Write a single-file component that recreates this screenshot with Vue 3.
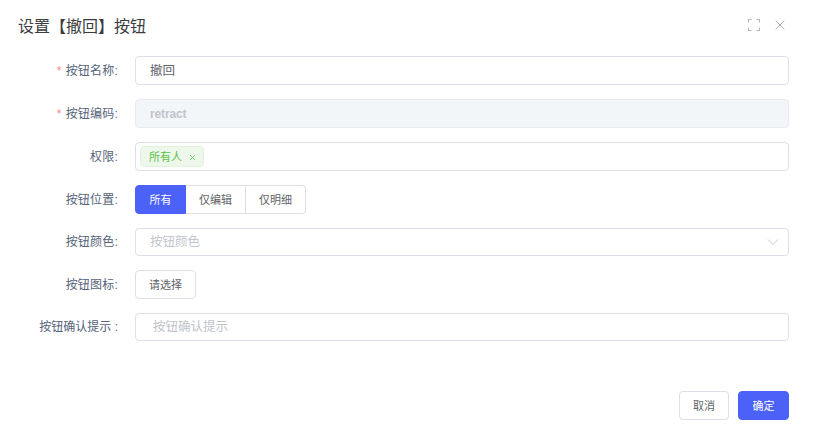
<template>
  <div class="dialog">
    <header class="head">
      <h1 class="title">设置【撤回】按钮</h1>
      <div class="tools">
        <svg class="ico" width="14" height="14" viewBox="0 0 14 14" fill="none" stroke="#b4b7bd" stroke-width="1.1">
          <path d="M1.5 4.5v-3h3M9.5 1.5h3v3M12.5 9.5v3h-3M4.5 12.5h-3v-3" />
        </svg>
        <svg class="ico" width="12" height="12" viewBox="0 0 12 12" fill="none" stroke="#a3a6ad" stroke-width="0.9">
          <path d="M1.7 1.7l8.6 8.6M10.3 1.7l-8.6 8.6" />
        </svg>
      </div>
    </header>
    <form class="form">
      <div class="row">
        <label class="label"><i>*</i>按钮名称:</label>
        <div class="input value"><span class="txt">撤回</span></div>
      </div>
      <div class="row">
        <label class="label"><i>*</i>按钮编码:</label>
        <div class="input disabled"><span class="txt">retract</span></div>
      </div>
      <div class="row">
        <label class="label">权限:</label>
        <div class="input tags">
          <span class="tag">
            <span class="txt">所有人</span>
            <svg class="tag-x" width="7" height="7" viewBox="0 0 7 7" fill="none" stroke="#6fcf72" stroke-width="1">
              <path d="M1 1l5 5M6 1L1 6" />
            </svg>
          </span>
        </div>
      </div>
      <div class="row">
        <label class="label">按钮位置:</label>
        <div class="group">
          <span v-for="(o, i) in options" :key="o.t" class="seg" :class="{ on: i === 0 }" :style="{ width: o.w + 'px' }"><span class="txt">{{ o.t }}</span></span>
        </div>
      </div>
      <div class="row short">
        <label class="label">按钮颜色:</label>
        <div class="input ph select">
          <span class="txt">按钮颜色</span>
          <svg width="12" height="8" viewBox="0 0 12 8" fill="none" stroke="#c4c7cd" stroke-width="1">
            <path d="M1 1.5l5 5 5-5" />
          </svg>
        </div>
      </div>
      <div class="row">
        <label class="label">按钮图标:</label>
        <button type="button" class="btn pick"><span class="txt">请选择</span></button>
      </div>
      <div class="row short">
        <label class="label wide">按钮确认提示 :</label>
        <div class="input ph tip"><span class="txt">按钮确认提示</span></div>
      </div>
    </form>
    <footer class="foot">
      <button type="button" class="btn"><span class="txt">取消</span></button>
      <button type="button" class="btn primary"><span class="txt">确定</span></button>
    </footer>
  </div>
</template>

<script setup>
const options = [
  { t: '所有', w: 51 },
  { t: '仅编辑', w: 60 },
  { t: '仅明细', w: 60 }
]
</script>

<style>
html, body { margin: 0; background: #fff; }
</style>

<style scoped>
.dialog {
  width: 814px;
  height: 437px;
  box-sizing: border-box;
  padding: 0 25px 0 0;
  display: flex;
  flex-direction: column;
  font-family: "Liberation Sans", "Noto Sans CJK SC", sans-serif;
  font-size: 12px;
  color: #606266;
  background: #fff;
  overflow: hidden;
}
.head {
  height: 56px;
  display: flex;
  align-items: flex-start;
  justify-content: space-between;
  padding-left: 18px;
  flex: none;
}
.title {
  margin: 17px 0 0;
  font-size: 16px;
  line-height: 20px;
  font-weight: 400;
  color: #3a3c40;
}
.tools {
  display: flex;
  align-items: center;
  gap: 13px;
  margin-top: 18px;
  margin-right: 3px;
}
.ico { display: block; }
.form {
  display: flex;
  flex-direction: column;
  gap: 14px;
  flex: none;
}
.row {
  display: flex;
  align-items: center;
  height: 29px;
}
.short { height: 28px; }
.txt { display: block; margin-top: -2px; }
.short .input .txt { margin-top: -4px; }
.label {
  width: 118px;
  flex: none;
  margin-right: 17px;
  padding-bottom: 3px;
  text-align: right;
  color: #56637a;
  letter-spacing: 0.2px;
  white-space: nowrap;
}
.label.wide { letter-spacing: 0; }
.label i {
  font-style: normal;
  color: #f78989;
  margin-right: 4px;
}
.input {
  flex: 1;
  height: 100%;
  box-sizing: border-box;
  border: 1px solid #dcdfe6;
  border-radius: 4px;
  padding: 0 14px;
  display: flex;
  align-items: center;
  font-size: 12.5px;
}
.value { color: #606266; }
.disabled {
  background: #f3f6f9;
  border-color: #e8ebf0;
  color: #c0c4cc;
  font-size: 12px;
  font-weight: 700;
  letter-spacing: -0.15px;
}
.disabled .txt { margin-top: 0; }
.ph { color: #c0c4cc; }
.tip { padding-left: 17px; }
.select { justify-content: space-between; padding-right: 9px; }
.tags { padding-left: 4px; }
.tag {
  height: 21px;
  box-sizing: border-box;
  padding: 0 7px 0 8px;
  background: #edf8ea;
  border: 1px solid #e1f3dc;
  border-radius: 4px;
  color: #5cc24a;
  font-size: 11px;
  display: flex;
  align-items: center;
}
.tag-x { margin-left: 7px; margin-top: 1px; }
.group { display: flex; height: 29px; }
.seg {
  box-sizing: border-box;
  display: flex;
  align-items: center;
  justify-content: center;
  border: 1px solid #dcdfe6;
  border-left-width: 0;
  color: #606266;
  font-size: 11px;
}
.seg:first-child { border-left-width: 1px; border-radius: 4px 0 0 4px; }
.seg:last-child { border-radius: 0 4px 4px 0; }
.seg.on { background: #4b61f8; border-color: #4b61f8; color: #fff; }
.btn {
  height: 29px;
  box-sizing: border-box;
  width: 50px;
  padding: 0;
  background: #fff;
  border: 1px solid #dcdfe6;
  border-radius: 4px;
  font: inherit;
  font-size: 11px;
  color: #606266;
}
.pick { width: 61px; }
.foot {
  margin-top: 50px;
  display: flex;
  justify-content: flex-end;
  gap: 9px;
}
.primary { width: 51px; background: #4b61f8; border-color: #4b61f8; color: #fff; }
</style>
